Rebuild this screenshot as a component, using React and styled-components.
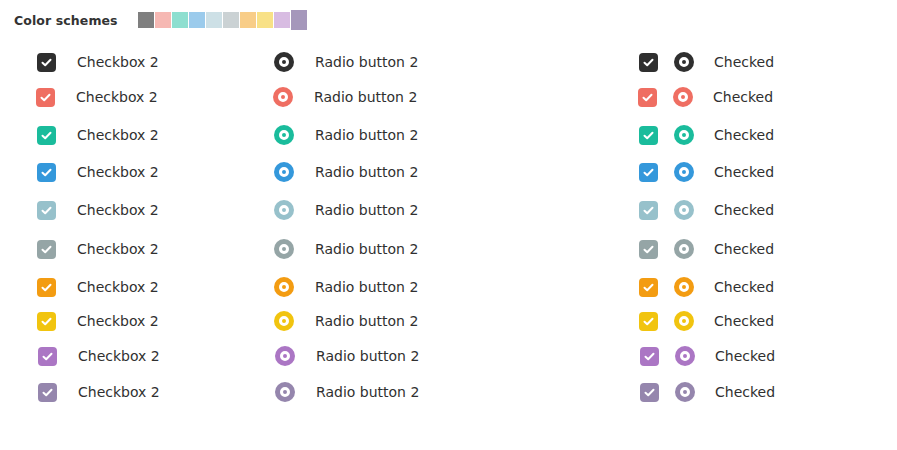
import styled, { createGlobalStyle } from "styled-components";

const GlobalStyle = createGlobalStyle`
  body {
    margin: 0;
    background: #fff;
    font-family: "DejaVu Sans", "Open Sans", sans-serif;
    color: #333;
  }
`;

const swatches = [
  "#7f7f7f",
  "#f6b8b3",
  "#8edfd0",
  "#9bcbec",
  "#cde0e6",
  "#cbd2d4",
  "#f8cd88",
  "#f8e187",
  "#d8bce2",
];

// gap = distance between row centres, shift = small horizontal nudge
const rows = [
  { color: "#2f2f2f", gap: 32, shift: 0 },
  { color: "#ef6e62", gap: 35, shift: -1 },
  { color: "#1abc9c", gap: 38, shift: 0 },
  { color: "#3498db", gap: 37, shift: 0 },
  { color: "#97c1cb", gap: 38, shift: 0 },
  { color: "#95a5a6", gap: 39, shift: 0 },
  { color: "#f39c12", gap: 38, shift: 0 },
  { color: "#f1c40f", gap: 34, shift: 0 },
  { color: "#ab76c4", gap: 35, shift: 1 },
  { color: "#9586ad", gap: 36, shift: 1 },
];

const Page = styled.div`
  width: 897px;
  height: 450px;
  overflow: hidden;
`;

const Header = styled.div`
  display: flex;
  align-items: center;
  height: 40px;
  padding-left: 14px;
  box-sizing: border-box;
`;

const Title = styled.h4`
  margin: 0 20px 0 0;
  font-size: 12.5px;
  font-weight: bold;
  color: #333;
  letter-spacing: 0.1px;
`;

const Swatches = styled.div`
  display: flex;
  align-items: center;
  gap: 1px;
  height: 20px;
`;

const Swatch = styled.span`
  width: 16px;
  height: ${(p) => (p.$active ? "20px" : "16px")};
  background: ${(p) => p.$color};
`;

const List = styled.div`
  display: flex;
  flex-direction: column;
`;

const Row = styled.div`
  display: flex;
  align-items: center;
  height: 20px;
  margin-top: ${(p) => p.$gap - 20}px;
  padding-left: ${(p) => 37 + p.$shift}px;
`;

const Group = styled.div`
  display: flex;
  align-items: center;
  width: ${(p) => p.$width}px;
  gap: ${(p) => p.$gap}px;
`;

const Box = styled.span`
  display: flex;
  align-items: center;
  justify-content: center;
  flex: none;
  width: 19px;
  height: 19px;
  border-radius: 4px;
  background: ${(p) => p.$color};
`;

const Radio = styled.span`
  display: flex;
  align-items: center;
  justify-content: center;
  flex: none;
  width: 20px;
  height: 20px;
  border-radius: 50%;
  background: ${(p) => p.$color};

  &::after {
    content: "";
    width: 4px;
    height: 4px;
    border-radius: 50%;
    border: 3px solid #fff;
    background: ${(p) => p.$color};
  }
`;

const Label = styled.span`
  font-size: 14px;
  color: #303030;
  white-space: nowrap;
`;

const Pair = styled.div`
  display: flex;
  align-items: center;
  gap: 16px;
`;

const Check = () => (
  <svg width="11" height="9" viewBox="0 0 11 9">
    <path
      d="M1.5 4.8 L4.2 7.3 L9.5 1.8"
      fill="none"
      stroke="#fff"
      strokeWidth="2"
      strokeLinecap="round"
      strokeLinejoin="round"
    />
  </svg>
);

export default function App() {
  return (
    <Page>
      <GlobalStyle />
      <Header>
        <Title>Color schemes</Title>
        <Swatches>
          {swatches.map((c) => (
            <Swatch key={c} $color={c} />
          ))}
          <Swatch $color="#a597bb" $active />
        </Swatches>
      </Header>
      <List>
        {rows.map((r, i) => (
          <Row key={i} $gap={r.gap} $shift={r.shift}>
            <Group $width={237} $gap={21}>
              <Box $color={r.color}>
                <Check />
              </Box>
              <Label>Checkbox 2</Label>
            </Group>
            <Group $width={365} $gap={21}>
              <Radio $color={r.color} />
              <Label>Radio button 2</Label>
            </Group>
            <Group $width={200} $gap={20}>
              <Pair>
                <Box $color={r.color}>
                  <Check />
                </Box>
                <Radio $color={r.color} />
              </Pair>
              <Label>Checked</Label>
            </Group>
          </Row>
        ))}
      </List>
    </Page>
  );
}
